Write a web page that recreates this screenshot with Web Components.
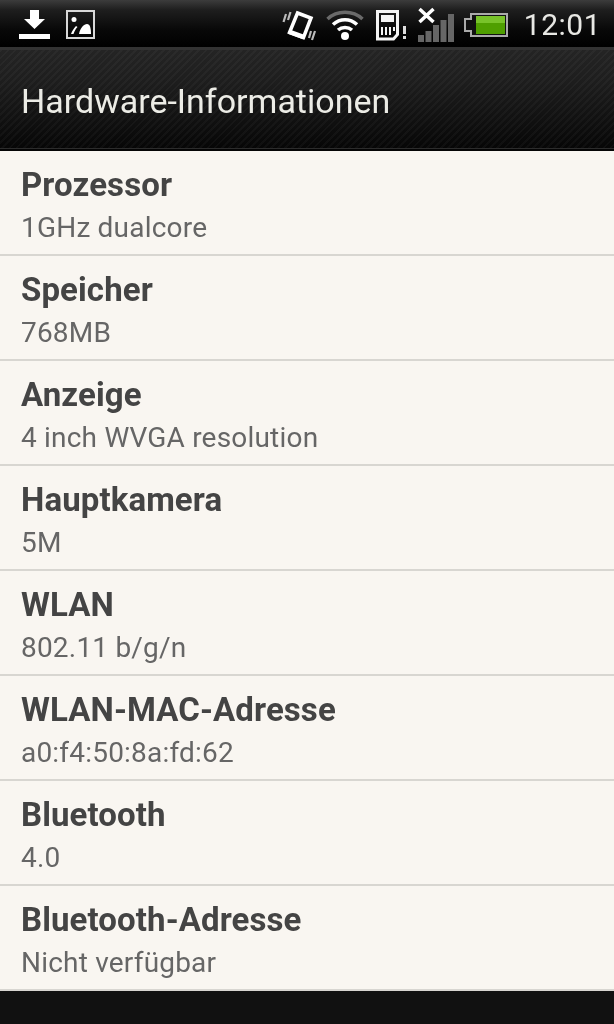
<!DOCTYPE html>
<html>
<head>
<meta charset="utf-8">
<title>Hardware-Informationen</title>
<style>
html, body { margin: 0; padding: 0; background: #111; }
body { width: 614px; height: 1024px; overflow: hidden; font-family: Roboto, sans-serif; }
</style>
</head>
<body>
<status-bar></status-bar>
<title-bar>Hardware-Informationen</title-bar>
<info-list>
  <info-row label="Prozessor">1GHz dualcore</info-row>
  <info-row label="Speicher">768MB</info-row>
  <info-row label="Anzeige">4 inch WVGA resolution</info-row>
  <info-row label="Hauptkamera">5M</info-row>
  <info-row label="WLAN">802.11 b/g/n</info-row>
  <info-row label="WLAN-MAC-Adresse">a0:f4:50:8a:fd:62</info-row>
  <info-row label="Bluetooth">4.0</info-row>
  <info-row label="Bluetooth-Adresse">Nicht verfügbar</info-row>
</info-list>

<script>
class StatusBar extends HTMLElement {
    constructor() {
        super();
        this.attachShadow({mode: 'open'});
        this.shadowRoot.innerHTML = `
<style>
:host {
    display: flex;
    align-items: flex-start;
    height: 47px;
    background: linear-gradient(#3c3c3c 0, #1e1e1e 10px, #080808 30px, #000 47px);
    color: #f2f2f2;
}
.left { display: flex; gap: 16px; padding: 10px 0 0 19px; flex: 1; }
.right { display: flex; align-items: flex-start; }
svg { display: block; filter: blur(.3px); }
.time { font: 400 30px/50px Roboto, sans-serif; color: #e8e8e4; margin-left: 16px; margin-right: 13px; letter-spacing: .5px; filter: blur(.3px); }
</style>
<div class="left">
    <svg width="31" height="29" viewBox="0 0 31 29"><path d="M11 0h9v9h6L15.500 19 5 9h6z" fill="#fff"/><rect y="24" width="31" height="5" fill="#fff"/></svg>
    <svg width="29" height="29" viewBox="0 0 29 29"><rect x="1" y="1" width="27" height="27" fill="none" stroke="#d8d8d8" stroke-width="2"/><circle cx="8" cy="9.500" r="2.500" fill="#fff"/><path d="M13 24c1-6 5-10 8-10s4 4 4 10z" fill="#fff"/><path d="M5 24c1-3 3-6 5-8l1.500 1c-2 2-3 4-4 7z" fill="#fff"/></svg>
</div>
<div class="right">
    <svg width="36" height="32" viewBox="0 0 36 32" style="margin-top:9px"><path d="M16.500 4l13.500 5-7.500 19.500-14-5z" fill="none" stroke="#fff" stroke-width="3.500"/><path d="M10 21l14 5-1.500 4.500-15-5.500z" fill="#fff"/><path d="M2.500 13l2.500-8M7 11l2.500-8M28 29l2-7M31 31l3-9" stroke="#bbb" stroke-width="2.200" fill="none"/></svg>
    <svg width="38" height="32" viewBox="0 0 38 32" style="margin-left:9px;margin-top:9px"><path d="M1.500 10C11 1 27 1 36.500 10" fill="none" stroke="#6a6a6a" stroke-width="3.500"/><path d="M7 15.500C14 9 24 9 31 15.500" fill="none" stroke="#fff" stroke-width="3.500"/><path d="M12 21c4-3.500 10-3.500 14 0" fill="none" stroke="#fff" stroke-width="3.500"/><circle cx="19" cy="27" r="4" fill="#fff"/></svg>
    <svg width="31" height="31" viewBox="0 0 31 31" style="margin-left:12px;margin-top:10px"><path d="M1.500 1.500h20v23l-4 4.500h-16z" fill="none" stroke="#f4f4f4" stroke-width="3"/><rect x="5" y="5" width="13" height="7" fill="#f4f4f4"/><path d="M6 17v8M10 17v8M14 17v8M18 17v4" stroke="#f4f4f4" stroke-width="2"/><rect x="27" y="16" width="3" height="8" fill="#ddd"/><rect x="27" y="26" width="3" height="3" fill="#ddd"/></svg>
    <svg width="36" height="36" viewBox="0 0 36 36" style="margin-left:11px;margin-top:7px"><path d="M1.500 2l14 13M15.500 2l-14 13" stroke="#fff" stroke-width="3.500" fill="none"/><rect x="0" y="28" width="6" height="7" fill="#666"/><rect x="7.500" y="24" width="6" height="11" fill="#666"/><rect x="15" y="18" width="6" height="17" fill="#666"/><rect x="22.500" y="13" width="6" height="22" fill="#666"/><rect x="30" y="7" width="6" height="28" fill="#666"/></svg>
    <svg width="44" height="24" viewBox="0 0 44 24" style="margin-left:10px;margin-top:13px"><path d="M7 1h36v22H7v-5H1V6h6z" fill="#111" stroke="#aaa" stroke-width="2"/><rect x="12" y="3" width="29" height="18" fill="#4f9f00"/><rect x="12" y="3" width="29" height="7" fill="#78c32a"/></svg>
    <span class="time">12:01</span>
</div>`;
    }
}

class TitleBar extends HTMLElement {
    constructor() {
        super();
        this.attachShadow({mode: 'open'});
        this.shadowRoot.innerHTML = `
<style>
:host {
    display: flex;
    align-items: center;
    box-sizing: border-box;
    height: 104px;
    padding: 3px 0 0 21px;
    border-top: 3px solid #333;
    border-bottom: 2px solid #050505;
    box-shadow: inset 0 -1px #2c2c2c;
    background:
        repeating-linear-gradient(135deg, rgba(255,255,255,.03) 0 2px, transparent 2px 5px),
        linear-gradient(#242424, #1e1e1e 30%, #111 70%, #060606);
    color: #ecece6;
    font: 400 34px Roboto, sans-serif;
}
span { filter: blur(.4px); }
</style>
<span><slot></slot></span>`;
    }
}

class InfoList extends HTMLElement {
    constructor() {
        super();
        this.attachShadow({mode: 'open'});
        this.shadowRoot.innerHTML = `
<style>
:host { display: block; background: #f9f6f1; }
</style>
<slot></slot>`;
    }
}

class InfoRow extends HTMLElement {
    constructor() {
        super();
        this.attachShadow({mode: 'open'});
        this.shadowRoot.innerHTML = `
<style>
:host {
    display: block;
    box-sizing: border-box;
    height: 105px;
    padding: 15px 21px 0;
    border-bottom: 2px solid #d8d6d1;
}
.label { font: 700 33px/38px Roboto, sans-serif; letter-spacing: .1px; color: #444; white-space: nowrap; filter: blur(.4px); }
.value { font: 400 28px/34px Roboto, sans-serif; letter-spacing: .2px; color: #666; white-space: nowrap; margin-top: 7px; filter: blur(.4px); }
</style>
<div class="label"></div>
<div class="value"><slot></slot></div>`;
    }

    connectedCallback() {
        this.shadowRoot.querySelector('.label').textContent = this.getAttribute('label');
    }
}

window.customElements.define('status-bar', StatusBar);
window.customElements.define('title-bar', TitleBar);
window.customElements.define('info-list', InfoList);
window.customElements.define('info-row', InfoRow);
</script>
</body>
</html>
